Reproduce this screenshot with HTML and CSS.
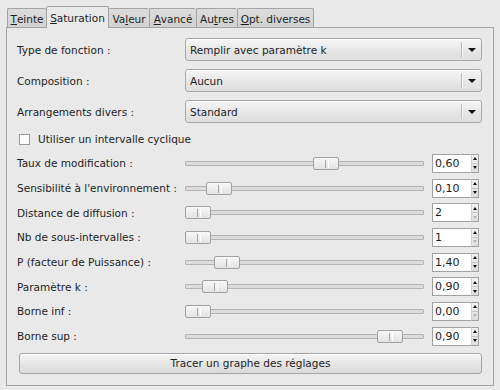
FILE: index.html
```html
<!DOCTYPE html>
<html lang="fr">
<head>
<meta charset="utf-8">
<link rel="stylesheet" href="styles.css">
</head>
<body>
<div class="win">
  <div class="tabs">
    <div class="tab w1"><u>T</u>einte</div>
    <div class="tab active w2"><u>S</u>aturation</div>
    <div class="tab w3">Va<u>l</u>eur</div>
    <div class="tab w4"><u>A</u>vancé</div>
    <div class="tab w5">Au<u>t</u>res</div>
    <div class="tab w6"><u>O</u>pt. diverses</div>
  </div>
  <div class="panel">
    <div class="row combo-row">
      <span class="label">Type de fonction :</span>
      <div class="combo"><span class="ctext">Remplir avec paramètre k</span><span class="sep"></span><span class="arrow"></span></div>
    </div>
    <div class="row combo-row">
      <span class="label">Composition :</span>
      <div class="combo"><span class="ctext">Aucun</span><span class="sep"></span><span class="arrow"></span></div>
    </div>
    <div class="row combo-row">
      <span class="label">Arrangements divers :</span>
      <div class="combo"><span class="ctext">Standard</span><span class="sep"></span><span class="arrow"></span></div>
    </div>
    <div class="check-row">
      <span class="checkbox"></span><span>Utiliser un intervalle cyclique</span>
    </div>
    <div class="sliders">
      <div class="srow">
        <span class="label">Taux de modification :</span>
        <div class="slider"><span class="track"></span><span class="handle" style="left:128px"></span></div>
        <div class="spin"><span class="field">0,60</span><span class="btns"><span class="up"></span><span class="down"></span></span></div>
      </div>
      <div class="srow">
        <span class="label">Sensibilité à l'environnement :</span>
        <div class="slider"><span class="track"></span><span class="handle" style="left:21px"></span></div>
        <div class="spin"><span class="field">0,10</span><span class="btns"><span class="up"></span><span class="down"></span></span></div>
      </div>
      <div class="srow">
        <span class="label">Distance de diffusion :</span>
        <div class="slider"><span class="track"></span><span class="handle" style="left:0px"></span></div>
        <div class="spin"><span class="field">2</span><span class="btns"><span class="up"></span><span class="down off"></span></span></div>
      </div>
      <div class="srow">
        <span class="label">Nb de sous-intervalles :</span>
        <div class="slider"><span class="track"></span><span class="handle" style="left:0px"></span></div>
        <div class="spin"><span class="field">1</span><span class="btns"><span class="up"></span><span class="down off"></span></span></div>
      </div>
      <div class="srow">
        <span class="label">P (facteur de Puissance) :</span>
        <div class="slider"><span class="track"></span><span class="handle" style="left:29px"></span></div>
        <div class="spin"><span class="field">1,40</span><span class="btns"><span class="up"></span><span class="down"></span></span></div>
      </div>
      <div class="srow">
        <span class="label">Paramètre k :</span>
        <div class="slider"><span class="track"></span><span class="handle" style="left:17px"></span></div>
        <div class="spin"><span class="field">0,90</span><span class="btns"><span class="up"></span><span class="down"></span></span></div>
      </div>
      <div class="srow">
        <span class="label">Borne inf :</span>
        <div class="slider"><span class="track"></span><span class="handle" style="left:0px"></span></div>
        <div class="spin"><span class="field">0,00</span><span class="btns"><span class="up"></span><span class="down off"></span></span></div>
      </div>
      <div class="srow">
        <span class="label">Borne sup :</span>
        <div class="slider"><span class="track"></span><span class="handle" style="left:192px"></span></div>
        <div class="spin"><span class="field">0,90</span><span class="btns"><span class="up"></span><span class="down"></span></span></div>
      </div>
    </div>
    <div class="button">Tracer un graphe des réglages</div>
  </div>
</div>
</body>
</html>
```

FILE: styles.css
```css
* { box-sizing: border-box; }
html, body {
  margin: 0;
  padding: 0;
  width: 500px;
  height: 390px;
  background: #e9e9e9;
  overflow: hidden;
}
body {
  font-family: "DejaVu Sans", sans-serif;
  font-size: 10.5px;
  color: #1e1e1e;
}
.win {
  padding: 6px 6px 0 6px;
}
.tabs {
  display: flex;
  align-items: flex-end;
  height: 21px;
  padding-left: 1px;
  position: relative;
  z-index: 1;
}
.tab {
  height: 19px;
  border: 1px solid #a4a4a4;
  border-bottom: none;
  border-right: none;
  background: linear-gradient(#dcdcdc, #d2d2d2);
  display: flex;
  align-items: center;
  justify-content: center;
  padding-top: 1px;
  border-radius: 2px 2px 0 0;
}
.tab u { text-decoration: underline; text-underline-offset: 1px; }
.tab.active {
  height: 22px;
  margin-bottom: -1px;
  background: #e9e9e9;
  border-right: 1px solid #a4a4a4;
  margin-right: -1px;
  position: relative;
  z-index: 2;
  padding-top: 0;
}
.tab.active + .tab { border-left-color: transparent; }
.tab:last-child { border-right: 1px solid #a4a4a4; }
.w1 { width: 39px; }
.w2 { width: 63px; }
.w3 { width: 41px; }
.w4 { width: 47px; }
.w5 { width: 41px; }
.w6 { width: 77px; }

.panel {
  border: 1px solid #a4a4a4;
  height: 359px;
  padding: 10px 10px 0 10px;
  background: #e9e9e9;
  display: flex;
  flex-direction: column;
}
.label { white-space: nowrap; }
.row {
  display: flex;
  align-items: center;
}
.combo-row { height: 23px; margin-bottom: 8px; }
.combo-row:nth-child(3) { margin-bottom: 0; }
.combo-row .label { width: 168px; flex: none; }
.combo {
  flex: 1;
  height: 23px;
  margin-right: 1px;
  border: 1px solid #a9a9a9;
  border-radius: 3px;
  background: linear-gradient(#f6f6f6, #e6e6e6 55%, #dedede);
  box-shadow: inset 0 1px 0 #ffffff;
  display: flex;
  align-items: center;
  padding-left: 4px;
}
.ctext { flex: 1; }
.sep {
  width: 2px;
  height: 15px;
  border-left: 1px solid #b8b8b8;
  border-right: 1px solid #fafafa;
  margin-right: 5px;
}
.arrow {
  width: 0;
  height: 0;
  border-left: 4px solid transparent;
  border-right: 4px solid transparent;
  border-top: 4px solid #111;
  margin-right: 5px;
  margin-top: 1px;
}
.check-row {
  height: 28px;
  padding-top: 4px;
  display: flex;
  align-items: center;
  padding-left: 2px;
}
.checkbox {
  width: 11px;
  height: 11px;
  border: 1px solid #9a9a9a;
  background: #fcfcfc;
  margin-right: 8px;
}
.sliders {
  display: grid;
  grid-template-rows: repeat(8, 24.7px);
}
.srow {
  display: grid;
  grid-template-columns: 160px 239px 47px;
  column-gap: 8px;
  align-items: center;
}
.slider {
  position: relative;
  height: 13px;
}
.track {
  position: absolute;
  left: 0;
  right: 0;
  top: 4px;
  height: 5px;
  border: 1px solid #b4b4b4;
  background: #dcdcdc;
  border-radius: 1px;
}
.handle {
  position: absolute;
  top: 0;
  width: 26px;
  height: 13px;
  border: 1px solid #a2a2a2;
  border-radius: 2px;
  background: linear-gradient(#f8f8f8, #e2e2e2);
}
.handle::after {
  content: "";
  position: absolute;
  left: 11px;
  top: 2px;
  height: 8px;
  border-left: 1px solid #a8a8a8;
  border-right: 1px solid #ffffff;
  width: 2px;
}
.spin {
  display: flex;
  height: 19px;
  width: 47px;
}
.field {
  width: 39px;
  height: 19px;
  background: #fff;
  border: 1px solid #a2a2a2;
  border-right: none;
  display: flex;
  align-items: center;
  padding-left: 2px;
  font-size: 11px;
}
.btns {
  width: 8px;
  height: 19px;
  display: flex;
  flex-direction: column;
  border: 1px solid #a2a2a2;
  border-left: 1px solid #d0d0d0;
  background: linear-gradient(#f2f2f2, #dedede);
}
.btns span {
  flex: 1;
  display: flex;
  align-items: center;
  justify-content: center;
}
.up::before, .down::before {
  content: "";
  width: 0;
  height: 0;
  border-left: 2.5px solid transparent;
  border-right: 2.5px solid transparent;
}
.up::before { border-bottom: 3px solid #111; }
.down::before { border-top: 3px solid #111; }
.down.off::before { border-top-color: #b6b6b6; }
.down { border-top: 1px solid #c8c8c8; }
.button {
  margin-top: 4px;
  margin-left: 2px;
  margin-right: 1px;
  height: 21px;
  border: 1px solid #a4a4a4;
  border-radius: 3px;
  background: linear-gradient(#f6f6f6, #e4e4e4 55%, #dadada);
  box-shadow: inset 0 1px 0 #fff;
  display: flex;
  align-items: center;
  justify-content: center;
}
```
